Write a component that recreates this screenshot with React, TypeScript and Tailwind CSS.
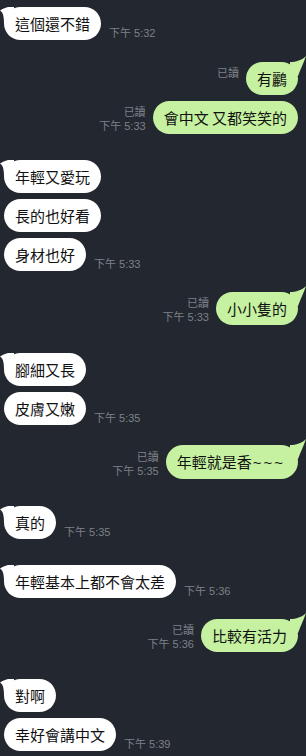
import React from "react";

type Msg = {
  side: "L" | "R";
  text: string;
  extra?: string;
  time?: string;
  tail?: boolean;
  mt: string;
};

const msgs: Msg[] = [
  { side: "L", text: "這個還不錯", time: "下午 5:32", tail: true, mt: "mt-0" },
  { side: "R", text: "有鸝", tail: true, mt: "mt-[22px]" },
  { side: "R", text: "會中文 又都笑笑的", time: "下午 5:33", mt: "mt-[6px]" },
  { side: "L", text: "年輕又愛玩", tail: true, mt: "mt-[26px]" },
  { side: "L", text: "長的也好看", mt: "mt-[6px]" },
  { side: "L", text: "身材也好", time: "下午 5:33", mt: "mt-[6px]" },
  { side: "R", text: "小小隻的", time: "下午 5:33", tail: true, mt: "mt-[21px]" },
  { side: "L", text: "腳細又長", tail: true, mt: "mt-[28px]" },
  { side: "L", text: "皮膚又嫩", time: "下午 5:35", mt: "mt-[6px]" },
  { side: "R", text: "年輕就是香", extra: "~~~", time: "下午 5:35", tail: true, mt: "mt-[20px]" },
  { side: "L", text: "真的", time: "下午 5:35", tail: true, mt: "mt-[27px]" },
  { side: "L", text: "年輕基本上都不會太差", time: "下午 5:36", tail: true, mt: "mt-[26px]" },
  { side: "R", text: "比較有活力", time: "下午 5:36", tail: true, mt: "mt-[21px]" },
  { side: "L", text: "對啊", tail: true, mt: "mt-[27px]" },
  { side: "L", text: "幸好會講中文", time: "下午 5:39", mt: "mt-[6px]" },
];

const cjk = "font-['Noto_Sans_CJK_TC','Noto_Sans_CJK_SC',sans-serif]";
const meta = "font-['Liberation_Sans','Noto_Sans_CJK_TC',sans-serif]";

function LeftTail() {
  return (
    <svg className="absolute left-[-4px] top-0" width="14" height="16" viewBox="0 0 14 16">
      <path d="M14 0 L8 0 C5 1 2 2 0 3.5 C2.5 5 4 8 4 16 L14 16 Z" fill="#ffffff" />
    </svg>
  );
}

function RightTail() {
  return (
    <svg className="absolute right-[-8px] top-[-6px]" width="16" height="22" viewBox="0 0 16 22">
      <path d="M0 6 C6 6 12 4 16 0 C14 6 11 12 8 20 L0 20 Z" fill="#c5f1a1" />
    </svg>
  );
}

function Row({ m }: { m: Msg }) {
  if (m.side === "L") {
    return (
      <div className={`flex items-end pl-[4px] ${m.mt}`}>
        <div
          className={`relative rounded-[17px] bg-white px-[11px] py-[6px] text-[15px] leading-[21px] text-[#111111] ${cjk}`}
        >
          {m.tail && <LeftTail />}
          <span className="relative">{m.text}</span>
        </div>
        {m.time && (
          <div className={`ml-[8px] text-[11px] leading-[14px] text-[#7d8189] whitespace-nowrap ${meta}`}>
            {m.time}
          </div>
        )}
      </div>
    );
  }
  return (
    <div className={`flex items-end justify-end pr-[8px] ${m.mt}`}>
      <div
        className={`mr-[7px] mb-[1px] flex flex-col items-end text-[11px] leading-[14px] text-[#7d8189] whitespace-nowrap ${meta}`}
      >
        <span>已讀</span>
        <span className="h-[14px]">{m.time ?? ""}</span>
      </div>
      <div
        className={`relative rounded-[17px] bg-[#c5f1a1] px-[11px] py-[6px] text-[15px] leading-[21px] text-[#111111] whitespace-nowrap ${cjk}`}
      >
        {m.tail && <RightTail />}
        <span className="relative">{m.text}</span>
        {m.extra && <span className={`relative ml-[1px] mr-[2px] tracking-[2px] ${meta}`}>{m.extra}</span>}
      </div>
    </div>
  );
}

export default function App() {
  return (
    <div className="h-[756px] w-[306px] overflow-hidden bg-[#23272f] pt-[7px]">
      {msgs.map((m, i) => (
        <Row key={i} m={m} />
      ))}
    </div>
  );
}
